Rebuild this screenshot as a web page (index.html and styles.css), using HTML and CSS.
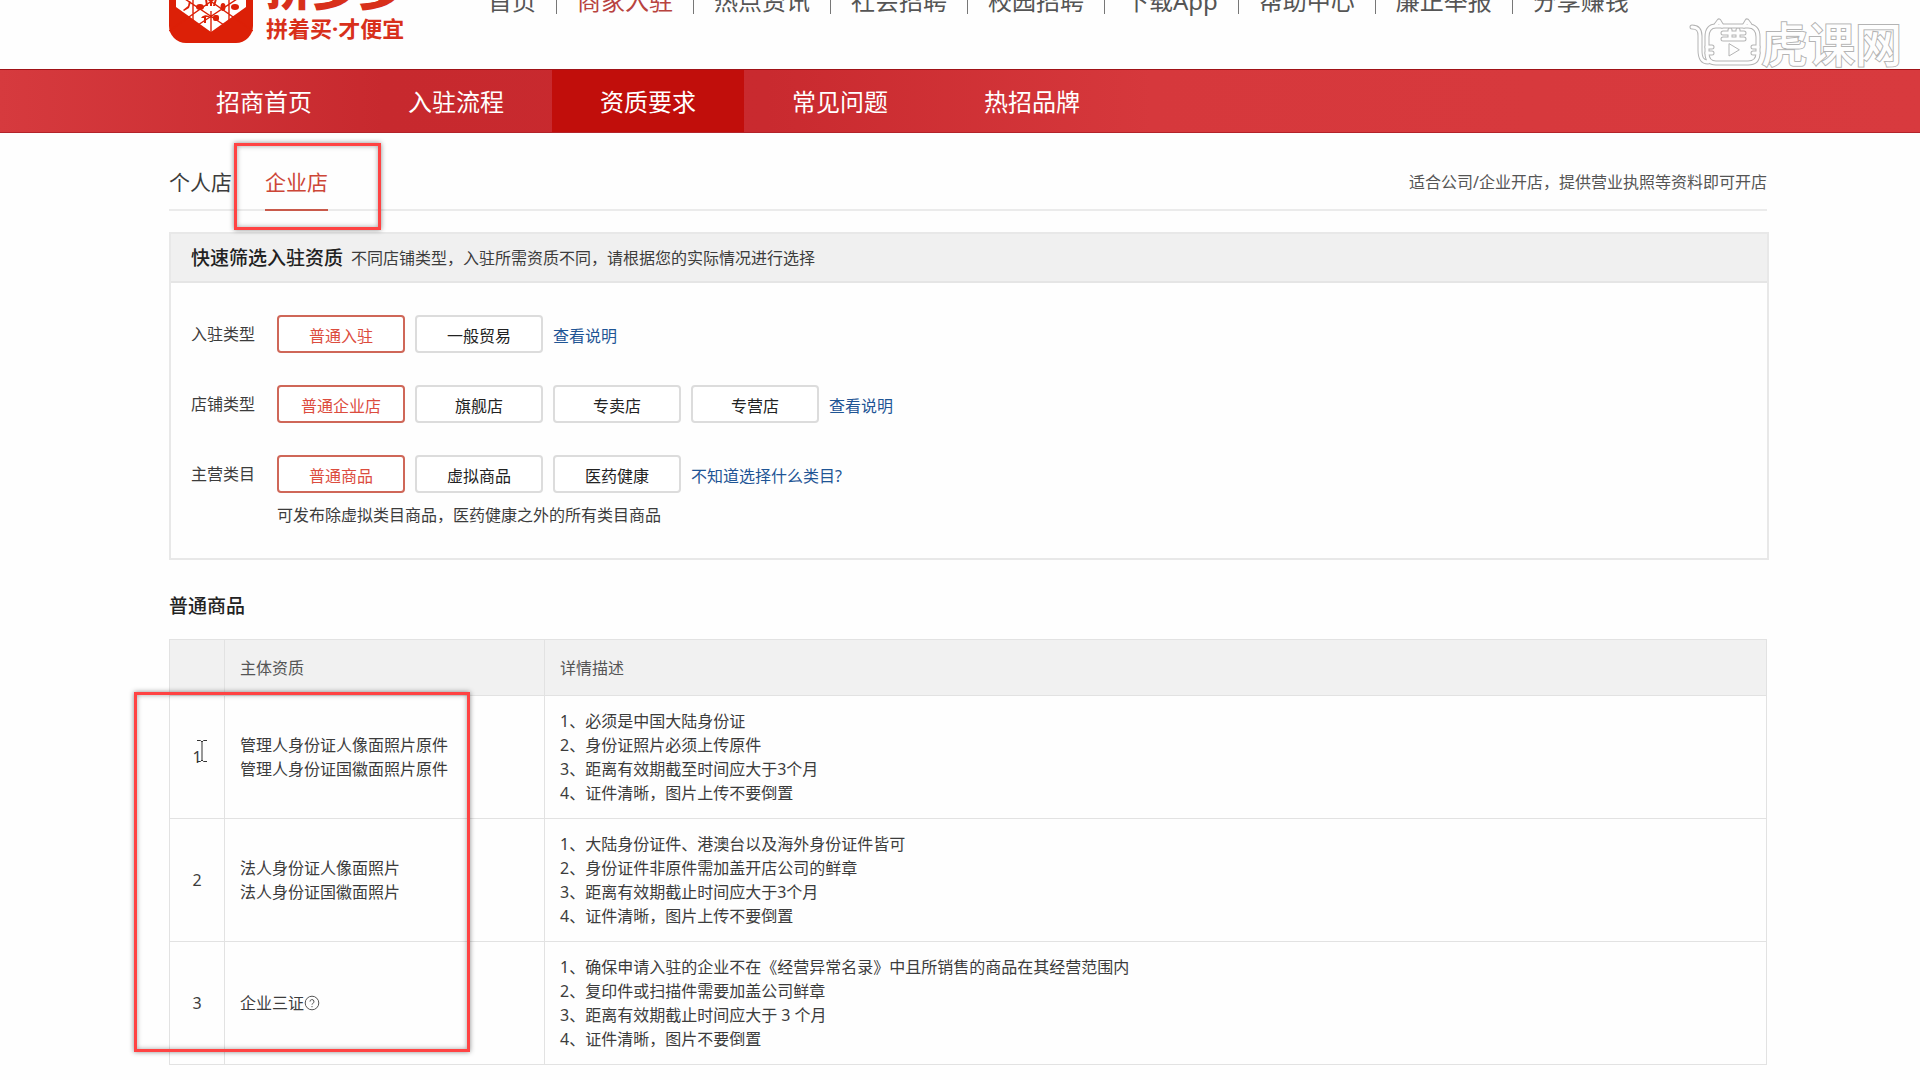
FILE: index.html
```html
<!DOCTYPE html>
<html lang="zh-CN">
<head>
<meta charset="utf-8">
<title>资质要求</title>
<link rel="stylesheet" href="styles.css">
</head>
<body>
<header class="header">
  <a class="brand" href="#">
    <svg class="brand-mark" viewBox="0 0 84 84" aria-hidden="true">
      <rect width="84" height="84" rx="17" fill="#dc2007"/>
      <path d="M42 73 7 48V30L24 13 42 22 60 13 77 30V48Z" fill="#fff"/>
      <path d="M7 34 55 66M77 34 29 66M0 72 54 34M84 72 30 34M42 52V73M24 36V61M60 36V61" fill="none" stroke="#dc2007" stroke-width="1.4"/>
      <g fill="#dc2007">
        <path d="M36 40h2l1 7h-2zM41 39h2v8h-2zM46 40h2l-2 7h-2z"/>
        <ellipse cx="31" cy="48" rx="4" ry="3"/><ellipse cx="54" cy="48" rx="2.5" ry="4"/>
        <ellipse cx="66" cy="48" rx="4" ry="3"/><path d="M14 51l5-4 1-5 2 1-2 6-5 3z"/>
        <path d="M32 59a5 4 0 0 1 9-1l-4 0v6h-2v-5z"/><rect x="44" y="56" width="6" height="6" rx="2"/>
      </g>
    </svg>
    <span class="brand-text">
      <span class="brand-name">拼多多</span>
      <span class="brand-slogan">拼着买·才便宜</span>
    </span>
  </a>
  <nav class="top-nav">
    <a href="#">首页</a>
    <a class="current" href="#">商家入驻</a>
    <a href="#">热点资讯</a>
    <a href="#">社会招聘</a>
    <a href="#">校园招聘</a>
    <a href="#">下载App</a>
    <a href="#">帮助中心</a>
    <a href="#">廉正举报</a>
    <a href="#">分享赚钱</a>
  </nav>
</header>

<nav class="main-nav">
  <a href="#">招商首页</a>
  <a href="#">入驻流程</a>
  <a class="active" href="#">资质要求</a>
  <a href="#">常见问题</a>
  <a href="#">热招品牌</a>
</nav>

<main class="main">
  <div class="tabs">
    <a class="tab" href="#">个人店</a>
    <a class="tab selected" href="#">企业店</a>
    <p class="tabs-note">适合公司/企业开店，提供营业执照等资料即可开店</p>
  </div>

  <section class="filter">
    <div class="filter-head">
      <h2>快速筛选入驻资质</h2>
      <p>不同店铺类型，入驻所需资质不同，请根据您的实际情况进行选择</p>
    </div>
    <div class="filter-body">
      <div class="filter-row">
        <span class="label">入驻类型</span>
        <button type="button" class="option chosen">普通入驻</button>
        <button type="button" class="option">一般贸易</button>
        <a href="#">查看说明</a>
      </div>
      <div class="filter-row">
        <span class="label">店铺类型</span>
        <button type="button" class="option chosen">普通企业店</button>
        <button type="button" class="option">旗舰店</button>
        <button type="button" class="option">专卖店</button>
        <button type="button" class="option">专营店</button>
        <a href="#">查看说明</a>
      </div>
      <div class="filter-row">
        <span class="label">主营类目</span>
        <button type="button" class="option chosen">普通商品</button>
        <button type="button" class="option">虚拟商品</button>
        <button type="button" class="option">医药健康</button>
        <a href="#">不知道选择什么类目?</a>
      </div>
      <p class="hint">可发布除虚拟类目商品，医药健康之外的所有类目商品</p>
    </div>
  </section>

  <h2 class="section-title">普通商品</h2>
  <table class="quals">
    <thead>
      <tr><th class="num"></th><th class="name">主体资质</th><th>详情描述</th></tr>
    </thead>
    <tbody>
      <tr>
        <td class="num">1</td>
        <td>管理人身份证人像面照片原件<br>管理人身份证国徽面照片原件</td>
        <td>1、必须是中国大陆身份证<br>2、身份证照片必须上传原件<br>3、距离有效期截至时间应大于3个月<br>4、证件清晰，图片上传不要倒置</td>
      </tr>
      <tr>
        <td class="num">2</td>
        <td>法人身份证人像面照片<br>法人身份证国徽面照片</td>
        <td>1、大陆身份证件、港澳台以及海外身份证件皆可<br>2、身份证件非原件需加盖开店公司的鲜章<br>3、距离有效期截止时间应大于3个月<br>4、证件清晰，图片上传不要倒置</td>
      </tr>
      <tr>
        <td class="num">3</td>
        <td><span class="with-help">企业三证<svg class="help" viewBox="0 0 16 16" aria-hidden="true"><circle cx="8" cy="8" r="6.8"/><path d="M6 6.6a2 2 0 1 1 2.8 1.8Q8 8.700 8 9.600M8 11v1.200"/></svg></span></td>
        <td>1、确保申请入驻的企业不在《经营异常名录》中且所销售的商品在其经营范围内<br>2、复印件或扫描件需要加盖公司鲜章<br>3、距离有效期截止时间应大于 3 个月<br>4、证件清晰，图片不要倒置</td>
      </tr>
    </tbody>
  </table>
</main>

<div class="mark mark-tab"></div>
<div class="mark mark-table"></div>
<svg class="cursor" viewBox="0 0 12 24" aria-hidden="true">
  <path d="M1 1.500H4.500L6 3 7.500 1.500H11M6 3V21M1 22.500H4.500L6 21 7.500 22.500H11"/>
</svg>
<div class="watermark">
  <svg class="cat" viewBox="0 0 72 50" aria-hidden="true">
    <g fill="none" stroke-linecap="round" stroke-linejoin="round">
      <g stroke="#b4b4b4" stroke-width="5">
        <path d="M3 9C9 9 11 12 11 18V32C11 40 13 44 19 44M27 8H59Q69 8 69 19V35Q69 45 59 45H27Q18 45 18 35V19Q18 8 27 8"/>
        <path d="M27 7 30 3 33 8M55 8 58 3 61 7"/>
        <path d="M34 15H55M34 21H55M41 12V21M49 12V21M18 29H23M18 35H23M64 29H69M64 35H69"/>
      </g>
      <g stroke="#fefefe" stroke-width="3">
        <path d="M3 9C9 9 11 12 11 18V32C11 40 13 44 19 44M27 8H59Q69 8 69 19V35Q69 45 59 45H27Q18 45 18 35V19Q18 8 27 8"/>
        <path d="M27 7 30 3 33 8M55 8 58 3 61 7"/>
        <path d="M34 15H55M34 21H55M41 12V21M49 12V21M18 29H23M18 35H23M64 29H69M64 35H69"/>
      </g>
      <path d="M40 26V38L50 32Z" stroke="#b4b4b4"/>
    </g>
  </svg>
  <span>虎课网</span>
</div>
</body>
</html>
```
FILE: styles.css
```css
* {
  box-sizing: border-box;
}

body {
  position: relative;
  margin: 0;
  overflow-x: hidden;
  background: #fefefe;
  color: #3c3c3c;
  font-family: "Noto Sans", "Noto Sans CJK SC", sans-serif;
  font-size: 16px;
  line-height: 24px;
}

a {
  color: inherit;
  text-decoration: none;
}

h2,
p {
  margin: 0;
}

/* The header is partly scrolled out above the window */
.header {
  display: flex;
  align-items: flex-start;
  gap: 79px;
  height: 110px;
  margin-top: -41px;
  padding: 0 151px 0 169px;
}

.brand {
  display: flex;
  gap: 13px;
  color: #d8301b;
  white-space: nowrap;
}

.brand-mark {
  width: 84px;
  height: 84px;
}

.brand-text {
  display: flex;
  flex-direction: column;
  width: 143px;
}

.brand-name {
  font-size: 46px;
  font-weight: 900;
  line-height: 56px;
}

.brand-slogan {
  font-size: 22px;
  font-weight: 700;
  line-height: 26px;
}

.top-nav {
  display: flex;
  padding-top: 29px;
  color: #555;
  font-size: 24px;
  line-height: 26px;
  white-space: nowrap;
}

.top-nav a + a {
  margin-left: 20px;
  padding-left: 20px;
  border-left: 1px solid #777;
}

.top-nav .current {
  color: #b8433f;
}

.main-nav {
  display: flex;
  height: 64px;
  padding-left: 168px;
  border-top: 1px solid #a01217;
  border-bottom: 1px solid #b3232a;
  background: linear-gradient(90deg, #d63a3e 0, #c7292e 20%, #c92a2f 40%, #d6383c 60%, #d83a3e 100%);
  color: #fff;
  font-size: 24px;
  line-height: 64px;
}

.main-nav a {
  width: 192px;
  height: 62px;
  text-align: center;
}

.main-nav .active {
  background: #c10e0b;
}

.main {
  padding: 24px 151px 14px 169px;
}

.tabs {
  display: flex;
  gap: 33px;
  margin-right: 2px;
  border-bottom: 2px solid #ebebeb;
  line-height: 50px;
}

.tab {
  margin-bottom: -2px;
  padding-bottom: 2px;
  border-bottom: 2px solid transparent;
  font-size: 21px;
}

.tab.selected {
  border-color: #c95a4b;
  color: #cd4637;
}

.tabs-note {
  margin-left: auto;
  color: #555;
}

.filter {
  margin-top: 21px;
  border: 2px solid #e8e8e8;
}

.filter-head {
  display: flex;
  align-items: center;
  gap: 8px;
  height: 49px;
  padding-left: 20px;
  border-bottom: 2px solid #e5e5e5;
  background: #f0f0f0;
}

.filter-head h2,
.section-title {
  color: #222;
  font-size: 19px;
  font-weight: 500;
}

.filter-body {
  padding: 32px 20px 31px;
}

.filter-row {
  display: flex;
  align-items: center;
  gap: 10px;
  height: 38px;
}

.filter-row + .filter-row {
  margin-top: 32px;
}

.filter-row a {
  padding-top: 3px;
  color: #1f5595;
}

.label {
  width: 76px;
}

.option {
  width: 128px;
  height: 38px;
  padding: 3px 0 0;
  border: 2px solid #dcdcdc;
  border-radius: 4px;
  background: #fff;
  color: #222;
  font: inherit;
}

.option.chosen {
  border-color: #cf6758;
  color: #dc4c3e;
}

.hint {
  padding: 10px 0 0 86px;
}

.section-title {
  margin: 34px 0 21px;
}

.quals {
  width: calc(100% - 2px);
  border-collapse: collapse;
  table-layout: fixed;
}

.quals th,
.quals td {
  padding: 13px 15px;
  border: 1px solid #e2e2e2;
  text-align: left;
}

.quals th {
  padding: 16px 15px 15px;
  background: #f1f1f1;
  color: #555;
  font-weight: 400;
}

.quals .num {
  width: 55px;
  padding-left: 0;
  padding-right: 0;
  text-align: center;
}

.quals .name {
  width: 320px;
}

.with-help {
  display: flex;
  align-items: center;
}

.help {
  width: 16px;
  height: 16px;
  fill: none;
  stroke: #555;
}

/* Highlight frames over the page */
.mark {
  position: absolute;
  border: 3px solid #ff4343;
  box-shadow: 0 0 5px rgba(0, 0, 0, 0.45), inset 0 0 5px rgba(0, 0, 0, 0.35);
  pointer-events: none;
}

.mark-tab {
  top: 143px;
  left: 234px;
  width: 147px;
  height: 87px;
}

.mark-table {
  top: 692px;
  left: 134px;
  width: 336px;
  height: 360px;
}

.cursor {
  position: absolute;
  top: 739px;
  left: 196px;
  width: 12px;
  height: 24px;
  fill: none;
  stroke: #333;
}

.watermark {
  position: absolute;
  top: 18px;
  right: 18px;
  display: flex;
  color: #fefefe;
  font-family: "Noto Sans CJK SC", sans-serif;
  font-size: 47px;
  font-weight: 500;
  line-height: 48px;
  paint-order: stroke fill;
  -webkit-text-stroke: 2px #b4b4b4;
}

.cat {
  width: 72px;
  height: 50px;
}
```
